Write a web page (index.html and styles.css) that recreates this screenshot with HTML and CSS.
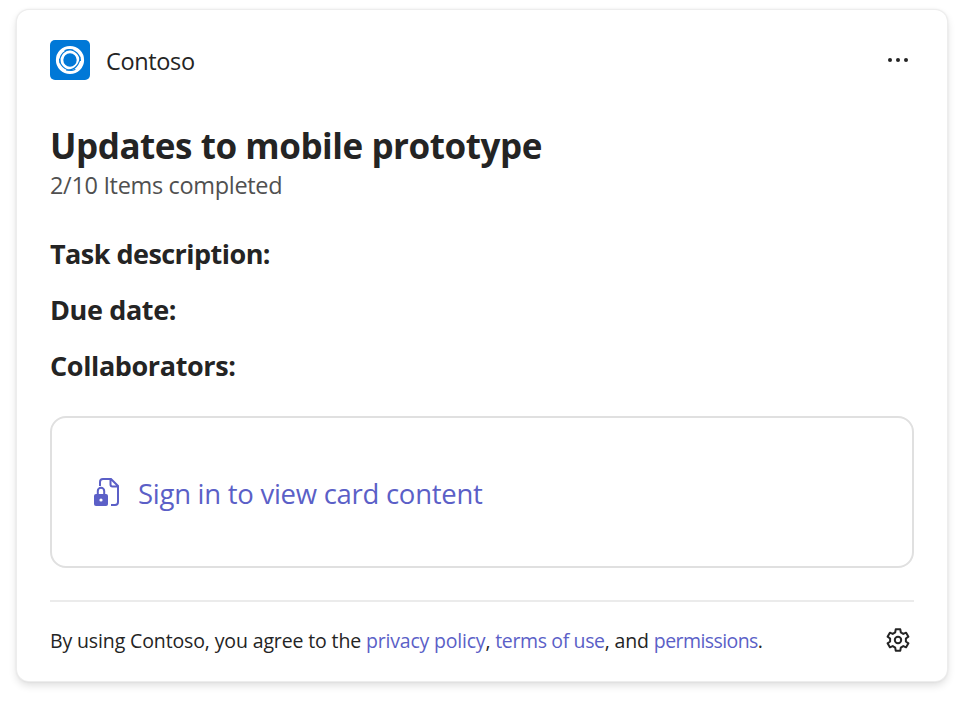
FILE: index.html
```html
<!DOCTYPE html>
<html lang="en">
<head>
<meta charset="utf-8">
<title>Contoso</title>
<link rel="stylesheet" href="styles.css">
</head>
<body>
<article class="card">
  <header class="header">
    <svg class="logo" viewBox="0 0 40 40"><rect width="40" height="40" rx="5" fill="#0078d7"/><circle cx="20" cy="20" r="10.400" fill="none" stroke="#fff" stroke-width="7.400"/><g fill="none" stroke="#0078d7" stroke-width="1.100" stroke-linecap="round"><path d="M15 10.500C21 7.500 29.500 12 30.500 20.500"/><path d="M30 17C30 24 24.500 31 16.500 30"/><path d="M25 29.500C18 32.500 10 27 9.500 19"/><path d="M10 23C9 15 15 8.500 23 10"/></g></svg>
    <span class="brand">Contoso</span>
    <svg class="more" viewBox="0 0 24 24" width="24" height="24"><circle cx="4" cy="12" r="2"/><circle cx="12" cy="12" r="2"/><circle cx="20" cy="12" r="2"/></svg>
  </header>
  <h1 class="title">Updates to mobile prototype</h1>
  <p class="progress">2/10 Items completed</p>
  <div class="fields">
    <h2 class="field">Task description:</h2>
    <h2 class="field field-date">Due date:</h2>
    <h2 class="field field-people">Collaborators:</h2>
  </div>
  <section class="signin">
    <svg class="lockdoc" viewBox="0 0 28 32" width="28" height="32"><path d="M6 10V6a3 3 0 0 1 3-3h8l7 7v16a3 3 0 0 1-3 3h-4M16.500 3v5.500a2 2 0 0 0 2 2H24" fill="none" stroke="#5b5fc7" stroke-width="2"/><rect x="0" y="18" width="14" height="12" rx="2" fill="#5b5fc7"/><path d="M3.800 19v-4a3.200 3.200 0 0 1 6.400 0v4" fill="none" stroke="#5b5fc7" stroke-width="2"/><circle cx="7" cy="24" r="1.600" fill="#fff"/></svg>
    <a class="signin-link">Sign in to view card content</a>
  </section>
  <footer class="footer">
    <p class="legal">By using Contoso, you agree to the <a class="privacy">privacy policy</a>, <a class="terms">terms of use</a>, and <a class="permissions">permissions</a>.</p>
    <svg class="gear" viewBox="-14 -14 28 28" width="28" height="28"><path d="M-2.300-10.700H2.300L2.800-7.600 5.280-6.050 8.120-7.340 10.420-3.360 7.880-1.550V1.550L10.420 3.360 8.120 7.340 5.280 6.050 2.800 7.600 2.300 10.700H-2.300L-2.800 7.600-5.280 6.050-8.120 7.340-10.420 3.360-7.880 1.550V-1.550L-10.420-3.360-8.120-7.340-5.280-6.050-2.800-7.600Z"/><circle r="3.200"/></svg>
  </footer>
</article>
</body>
</html>
```

FILE: styles.css
```css
* { box-sizing: border-box; }
body { margin: 0; min-height: 703px; padding: 10px 15px 0 17px; background: #fff; font-family: "Open Sans", "Noto Sans", sans-serif; color: #242424; }
h1, h2, p { margin: 0; white-space: nowrap; }
a { color: #5b5fc7; }
.card { width: 930px; height: 671px; padding: 30px 33px 0; border-radius: 12px; background: #fff; box-shadow: 0 0 0 1px #ededed, 0 0 3px rgba(0,0,0,.14), 0 4px 9px rgba(0,0,0,.14); }
.header { display: flex; align-items: center; height: 40px; }
.logo { width: 40px; height: 40px; }
.brand { margin-left: 16px; padding-top: 1px; font-size: 23.5px; letter-spacing: -.35px; }
.more { margin-left: auto; margin-right: 4px; fill: #242424; }
.title { margin-top: 42px; font-size: 35px; line-height: 48px; font-weight: 700; letter-spacing: -.45px; }
.progress { height: 32px; font-size: 23.5px; line-height: 31px; color: #505050; letter-spacing: -.33px; }
.fields { margin-top: 24px; }
.field { font-size: 27px; line-height: 56px; letter-spacing: -.54px; }
.field-date, .field-people { letter-spacing: -.38px; }
.signin { display: flex; align-items: center; height: 152px; margin-top: 22px; padding-left: 42px; border: 2px solid #e0e0e0; border-radius: 16px; }
.signin-link { font-size: 27.5px; margin: 2px 0 0 16px; letter-spacing: -.27px; }
.footer { display: flex; align-items: center; justify-content: space-between; margin-top: 32px; border-top: 2px solid #ebebeb; height: 78px; }
.legal { font-size: 19.5px; letter-spacing: -.13px; padding-top: 1px; }
.privacy { letter-spacing: -.2px; }
.terms { letter-spacing: -.37px; }
.permissions { letter-spacing: -.57px; }
.gear { margin-right: 2px; fill: none; stroke: #242424; stroke-width: 2; stroke-linejoin: round; }
```
